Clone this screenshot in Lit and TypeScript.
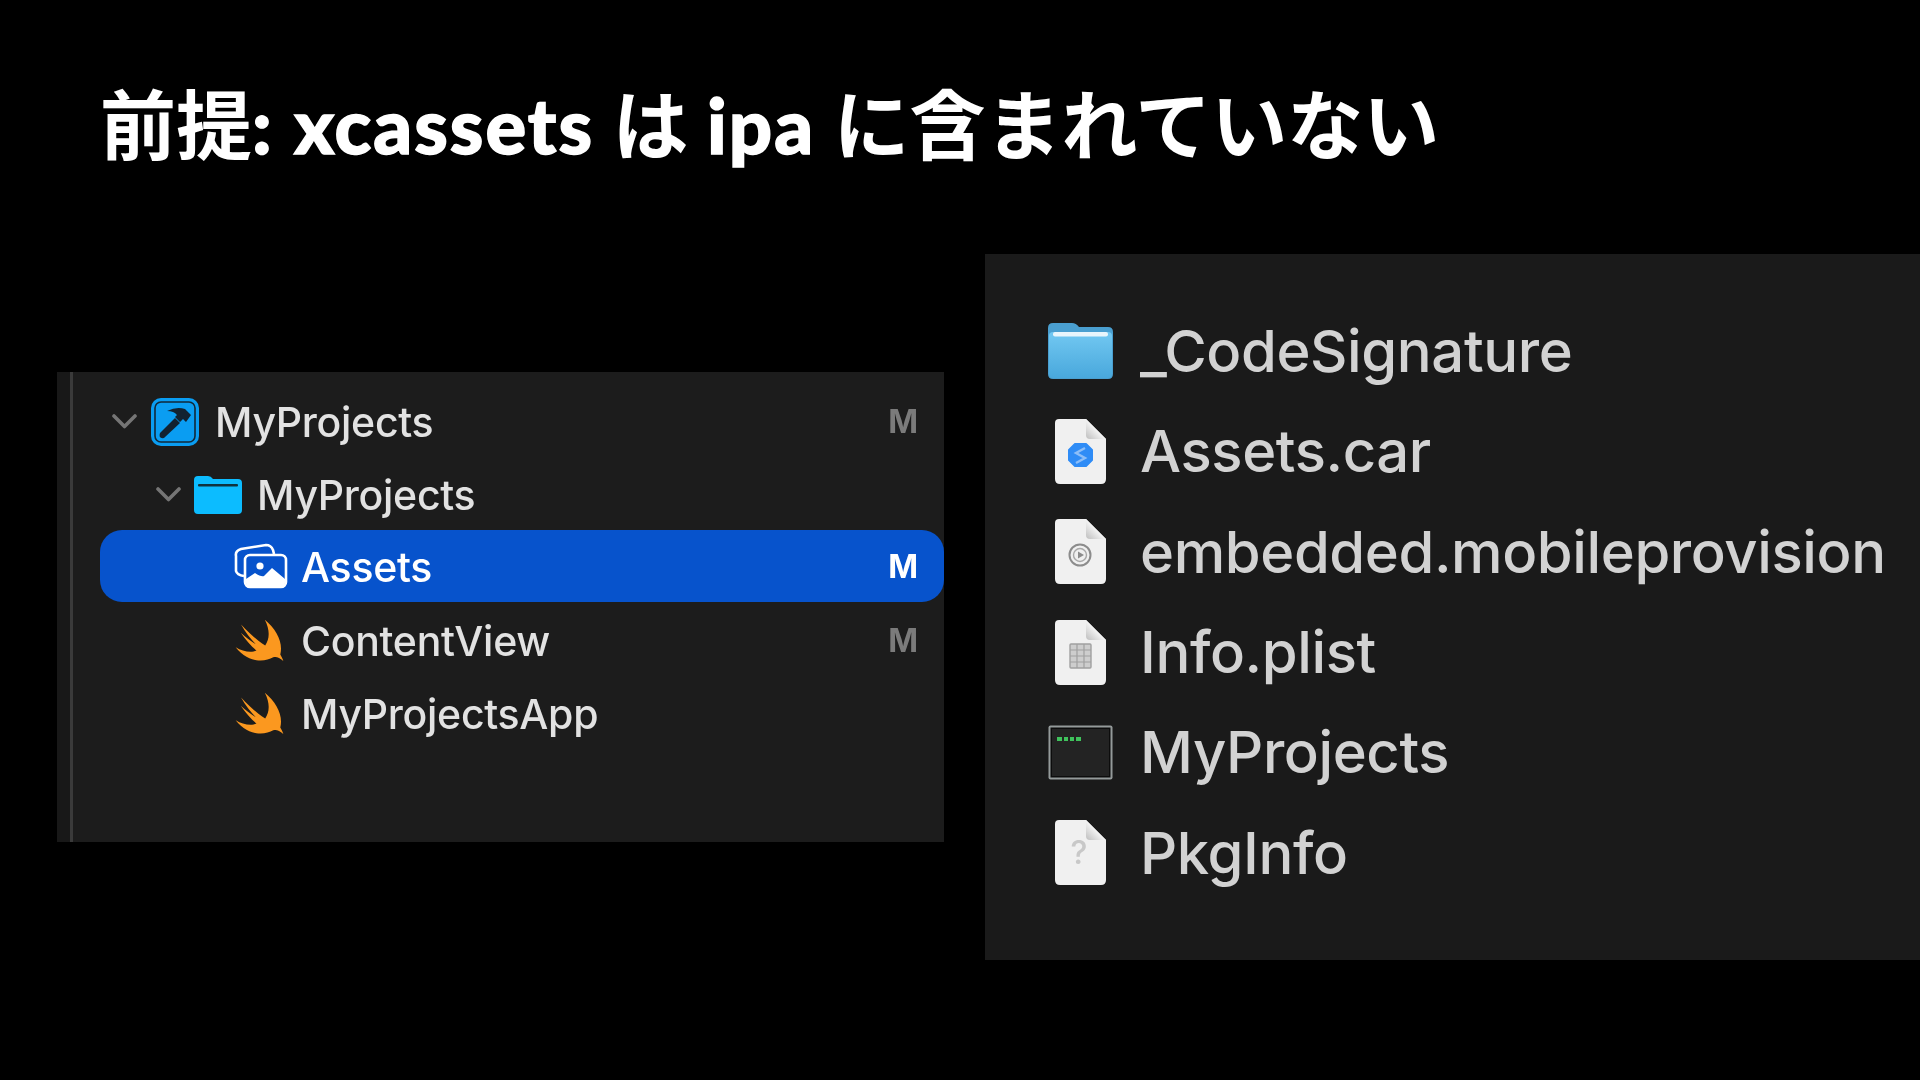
import { LitElement, html, css, svg } from "lit";
import { customElement } from "lit/decorators.js";

const chevron = html`<svg class="chev" viewBox="0 0 25 15"><path d="M2 2 L12.5 12.5 L23 2" fill="none" stroke="#757575" stroke-width="3.6" stroke-linecap="round" stroke-linejoin="round"/></svg>`;

const hammer = html`<svg class="ic" style="width:50px;height:50px" viewBox="0 0 50 50">
  <rect x="1" y="1" width="48" height="48" rx="10" fill="#0a9df2"/>
  <rect x="5" y="5" width="40" height="40" rx="6" fill="#0a9df2" stroke="#11293a" stroke-width="1.6"/>
  <path d="M10 36 L25 21 L30 26 L14 41 Q8 42 10 36Z" fill="#122231"/>
  <path d="M17 14 Q27 9 35 12 L41 18 L36 25 L33 22 L30 25 L25 20 L27 18 Q24 14 17 14Z" fill="#122231"/>
</svg>`;

const xfolder = html`<svg class="ic" style="width:48px;height:40px" viewBox="0 0 48 40">
  <path d="M0 5 Q0 1 4 1 H14 Q17 1 19 4 H44 Q48 4 48 8 V35 Q48 39 44 39 H4 Q0 39 0 35Z" fill="#0cbcff"/>
  <rect x="4" y="9" width="40" height="2.4" rx="1" fill="#10323f"/>
</svg>`;

const assets = html`<svg class="ic" style="width:54px;height:46px" viewBox="0 0 54 46">
  <path d="M10 33 Q3 32 2 28 L2 13 Q1 8 7 6 L32 2 Q37 2 39 7 L40 11" fill="none" stroke="#fff" stroke-width="2.6"/>
  <rect x="11" y="12" width="41" height="32" rx="5" fill="#0753cc" stroke="#fff" stroke-width="2.6"/>
  <circle cx="26" cy="23" r="3.6" fill="#fff"/>
  <path d="M12 36 L21 30 Q27 34 30 33 L38 25 L51 36 V40 Q51 44 46 44 H17 Q12 44 12 40Z" fill="#fff"/>
</svg>`;

const swift = html`<svg class="ic" style="width:52px;height:47px" viewBox="105 50 155 140">
  <path fill="#fb981f" d="M197 58 C232 88 252 125 243 162 C246 168 250 174 252 181 C240 170 230 167 222 170 C195 186 145 186 110 140 C130 152 155 158 172 150 C155 136 138 116 125 97 C140 110 155 123 170 131 C155 115 138 94 126 72 C148 95 172 118 198 135 C212 115 212 88 197 58Z"/>
</svg>`;

const finderFolder = html`<svg class="ic" style="width:65px;height:58px" viewBox="0 0 65 58">
  <defs><linearGradient id="fg" x1="0" y1="0" x2="0" y2="1"><stop offset="0" stop-color="#72c8f2"/><stop offset="1" stop-color="#49a8dc"/></linearGradient></defs>
  <path d="M0 6 Q0 1 5 1 H24 Q28 1 31 5 H60 Q65 5 65 10 V52 Q65 57 60 57 H5 Q0 57 0 52Z" fill="#4a9fd0"/>
  <path d="M1 14 Q1 10 5 10 H60 Q64 10 64 14 V52 Q64 56 60 56 H5 Q1 56 1 52Z" fill="url(#fg)"/>
  <rect x="5" y="10" width="55" height="4.5" rx="2" fill="#e8f5fc"/>
</svg>`;

const doc = (inner: unknown) => html`<svg class="ic" style="width:51px;height:65px" viewBox="0 0 51 65">
  <defs><linearGradient id="fold" x1="0" y1="1" x2="1" y2="0"><stop offset="0" stop-color="#bdbdbd"/><stop offset="0.55" stop-color="#fafafa"/></linearGradient></defs>
  <path d="M4 0 H31 L51 20 V60 Q51 65 46 65 H5 Q0 65 0 60 V4 Q0 0 4 0Z" fill="#f0f0f0"/>
  <path d="M31 0 L51 20 H35 Q31 20 31 16Z" fill="url(#fold)"/>
  ${inner}
</svg>`;

const carIcon = doc(svg`<path d="M20 25 H31 L37 31 V41 L31 47 H20 L14 41 V31Z" fill="#2f8cf6" stroke="#2f8cf6" stroke-width="2" stroke-linejoin="round"/><path d="M30 29 L21 34 L30 39 L21 44" fill="none" stroke="#8dbef8" stroke-width="2.4"/>`);
const provIcon = doc(svg`<circle cx="25" cy="36" r="10.5" fill="none" stroke="#8c8c8c" stroke-width="2"/><circle cx="25" cy="36" r="6.5" fill="none" stroke="#a8a8a8" stroke-width="1.4"/><path d="M23 32.5 L29 36 L23 39.5Z" fill="#8c8c8c"/>`);
const plistIcon = doc(svg`<rect x="15" y="24" width="21" height="24" rx="1" fill="#cdcdcd" stroke="#a0a0a0" stroke-width="1.4"/><path d="M15 30 H36 M15 36 H36 M15 42 H36 M22 24 V48 M29 24 V48" stroke="#a0a0a0" stroke-width="1.2"/>`);
const unkIcon = doc(svg`<text x="24" y="44" text-anchor="middle" font-family="Inter, sans-serif" font-size="32" fill="#c8c8c8">?</text>`);

const terminal = html`<svg class="ic" style="width:65px;height:55px" viewBox="0 0 65 55">
  <rect x="0.5" y="0.5" width="64" height="54" rx="2" fill="#949a9a"/>
  <rect x="2.5" y="2.5" width="60" height="50" fill="#0c0c0c"/>
  <rect x="4" y="4" width="57" height="47" fill="#232323"/>
  <path d="M9 14 H14 M16 14 H20 M22 14 H26 M28 14 H33" stroke="#3fc25c" stroke-width="4"/>
</svg>`;

@customElement("app-root")
export class AppRoot extends LitElement {
  static styles = css`
    :host { display: block; width: 1920px; height: 1080px; overflow: hidden; background: #000; padding-top: 75px; box-sizing: border-box; }
    .title { margin: 0 0 0 100px; height: 100px; line-height: 100px; color: #fff; font-family: Lato, "Noto Sans CJK JP", sans-serif; font-weight: 700; font-size: 76px; white-space: nowrap; }
    .lat { font-weight: 900; letter-spacing: 2px; -webkit-text-stroke: 1.4px #fff; }
    .stage { display: flex; align-items: flex-start; margin-top: 79px; padding-left: 57px; }
    .left { width: 887px; height: 470px; margin-top: 118px; flex: none; background: #1c1c1c; display: flex; box-sizing: border-box; }
    .rail { width: 13px; flex: none; background: #181818; border-right: 3px solid #3a3a3a; }
    .list { flex: 1; padding: 13px 0 0 27px; min-width: 0; font: 500 41px Inter, sans-serif; color: #e2e2e2; filter: blur(0.6px); }
    .row { height: 73px; display: flex; align-items: center; }
    .row.sel { background: #0753cc; border-radius: 22px; color: #fff; height: 72px; margin: -1px 0 2px; }
    .d0 { padding-left: 12px; }
    .d1 { padding-left: 56px; }
    .d2 { padding-left: 134px; }
    .chev { width: 25px; height: 15px; flex: none; margin-right: 13px; }
    .ic { flex: none; display: block; }
    .name { margin-left: 15px; letter-spacing: -0.3px; }
    .sel .name { margin-left: 13px; padding-top: 2px; }
    .m { margin-left: auto; margin-right: 26px; font-size: 32px; font-weight: 700; color: #7b7b7b; letter-spacing: 0; }
    .sel .m { color: #fff; }
    .right { margin-left: 41px; flex: none; width: 935px; height: 706px; background: #1a1a1a; box-sizing: border-box; padding: 47px 0 0 63px; font: 500 58px Inter, sans-serif; color: #d2d2d2; filter: blur(0.7px); }
    .frow { height: 100.3px; display: flex; align-items: center; }
    .cell { width: 65px; flex: none; display: flex; justify-content: center; margin-right: 27px; }
    .fname { white-space: nowrap; letter-spacing: -0.4px; }
  `;

  render() {
    const files: [unknown, string][] = [
      [finderFolder, "_CodeSignature"],
      [carIcon, "Assets.car"],
      [provIcon, "embedded.mobileprovision"],
      [plistIcon, "Info.plist"],
      [terminal, "MyProjects"],
      [unkIcon, "PkgInfo"],
    ];
    return html`
      <h1 class="title">前提<span class="lat">: xcassets</span> は <span class="lat">ipa</span> に含まれていない</h1>
      <div class="stage">
        <section class="left">
          <div class="rail"></div>
          <div class="list">
            <div class="row d0">${chevron}${hammer}<span class="name">MyProjects</span><span class="m">M</span></div>
            <div class="row d1">${chevron}${xfolder}<span class="name">MyProjects</span></div>
            <div class="row d2 sel">${assets}<span class="name">Assets</span><span class="m">M</span></div>
            <div class="row d2">${swift}<span class="name">ContentView</span><span class="m">M</span></div>
            <div class="row d2">${swift}<span class="name">MyProjectsApp</span></div>
          </div>
        </section>
        <section class="right">
          ${files.map(([i, n]) => html`<div class="frow"><div class="cell">${i}</div><span class="fname">${n}</span></div>`)}
        </section>
      </div>
    `;
  }
}
